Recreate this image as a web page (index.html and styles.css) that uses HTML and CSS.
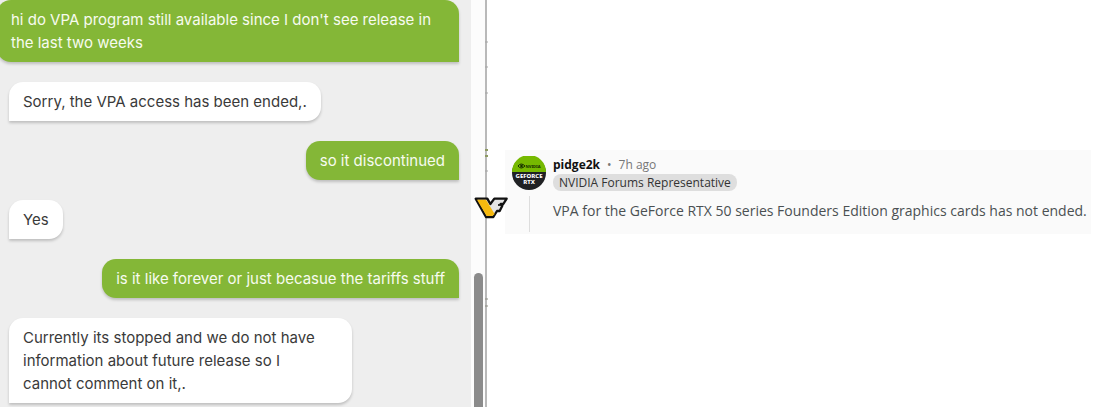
FILE: index.html
```html
<!DOCTYPE html>
<html lang="en">
<head>
    <meta charset="UTF-8">
    <meta name="viewport" content="width=device-width, initial-scale=1.0">
    <title>VPA program chat</title>
    <link rel="stylesheet" href="styles.css">
</head>
<body>
    <main class="page">
        <section class="chat">
            <div class="messages">
                <p class="message user long">hi do VPA program still available since I don't see release in the last two weeks</p>
                <p class="message agent">Sorry, the VPA access has been ended,.</p>
                <p class="message user">so it discontinued</p>
                <p class="message agent">Yes</p>
                <p class="message user">is it like forever or just becasue the tariffs stuff</p>
                <p class="message agent">Currently its stopped and we do not have<br>information about future release so I<br>cannot comment on it,.</p>
            </div>
            <div class="scrollbar">
                <div class="thumb"></div>
            </div>
        </section>

        <div class="divider">
            <!-- Faint marks along the line -->
            <svg class="marks" width="4" height="310" viewBox="0 0 4 310" aria-hidden="true">
                <path d="M0 42 H3 M0 67 H3 M0 93 H3 M0 171 H3" stroke="#a5a5a5"/>
                <path d="M0 150 H3 M0 156 H3" stroke="#8e9a62" stroke-width="2"/>
                <path d="M0 299 H3 M0 306 H3" stroke="#8b8b80"/>
            </svg>
            <!-- VF badge over the divider -->
            <svg class="badge" width="34" height="24" viewBox="0 0 102 72" aria-hidden="true">
                <path d="M5 8 H40 L49 24 L61 8 H98 L88 24 H80 L85 29 L77 45 H69 L58 63 H36 Z" fill="#e4e4e4" stroke="#111" stroke-width="7" stroke-linejoin="round"/>
                <path d="M9 11 H36 L62 54 L55 60 H38 Z" fill="#f6b90f"/>
                <path d="M72 27 H86" stroke="#111" stroke-width="5"/>
            </svg>
        </div>

        <section class="forum">
            <article class="comment">
                <div class="side">
                    <svg class="avatar" width="34" height="34" viewBox="0 0 34 34" role="img" aria-label="NVIDIA GeForce RTX">
                        <circle cx="17" cy="17" r="17" fill="#202124"/>
                        <path d="M0 16 A17 17 0 0 1 34 16 Z" fill="#76b900"/>
                        <path d="M6 10 Q9 6 13 10 Q9 14 6 10 Z" fill="none" stroke="#173000" stroke-width="1"/>
                        <circle cx="9.500" cy="10" r="1.300" fill="#173000"/>
                        <text x="21" y="12" class="brand">NVIDIA</text>
                        <text x="17" y="22" class="product">GEFORCE</text>
                        <text x="17" y="28" class="product">RTX</text>
                    </svg>
                    <div class="thread"></div>
                </div>
                <div class="body">
                    <div class="meta">
                        <a href="#" class="author">pidge2k</a>
                        <span class="dot">•</span>
                        <span class="time">7h ago</span>
                    </div>
                    <span class="flair">NVIDIA Forums Representative</span>
                    <p class="text">VPA for the GeForce RTX 50 series Founders Edition graphics cards has not ended.</p>
                </div>
            </article>
        </section>
    </main>
</body>
</html>
```
FILE: styles.css
```css
body {
    margin: 0;
    background-color: #fff;
    font-family: 'Open Sans', sans-serif;
}
.page {
    display: flex;
    min-height: 100vh;
}

/* Chat */
.chat {
    display: flex;
    flex: 0 0 485px;
    background-color: #eeeeee;
}
.messages {
    flex: 1;
    display: flex;
    flex-direction: column;
    gap: 20px;
    padding: 0 12px 4px 9px;
}
.message {
    margin: 0;
    padding: 8px 14px;
    max-width: 315px;
    border-radius: 14px;
    font-family: Inter, sans-serif;
    font-size: 15px;
    line-height: 23px;
    box-shadow: 0 2px 3px rgba(0, 0, 0, 0.2);
}
.agent:last-child {
    width: 315px;
}
.user {
    align-self: flex-end;
    max-width: 400px;
    background-color: #84b737;
    color: #f7fbef;
    border-bottom-right-radius: 0;
}
.agent {
    align-self: flex-start;
    background-color: #fff;
    color: #3a3a3a;
    border-bottom-left-radius: 0;
}
.long {
    max-width: none;
    margin-left: -12px; /* Runs past the left edge */
}
.scrollbar {
    width: 14px;
    display: flex;
    flex-direction: column;
    align-items: center;
    background-color: #fcfcfc;
}
.thumb {
    width: 9px;
    flex: 1;
    margin-top: 273px;
    border-radius: 5px 5px 0 0;
    background-color: #8b8b8b;
}

/* Line between both panes */
.divider {
    position: relative;
    width: 2px;
    background-color: #b9b9b9;
}
.marks {
    position: absolute;
    top: 0;
    left: 0;
}
.badge {
    position: absolute;
    top: 196px;
    left: -11px;
}

/* Forum comment */
.forum {
    flex: 1;
    padding: 150px 7px 0 18px;
}
.comment {
    display: flex;
    gap: 7px;
    padding: 6px 2px 2px 7px;
    background-color: #fafafa;
}
.side {
    display: flex;
    flex-direction: column;
    align-items: center;
    gap: 6px;
}
.thread {
    flex: 1;
    width: 1px;
    background-color: #dddddd;
}
.brand,
.product {
    font-family: 'Noto Sans', sans-serif;
    font-weight: 800;
    text-anchor: middle;
}
.brand {
    font-size: 4px;
    fill: #173000;
}
.product {
    font-size: 6px;
    fill: #fff;
}
.body {
    flex: 1;
    color: #4a5052;
}
.meta {
    display: flex;
    gap: 7px;
    font-size: 12px;
    line-height: 18px;
    color: #777;
}
.author {
    color: #111;
    font-weight: 700;
    text-decoration: none;
}
.flair {
    display: table;
    padding: 0 6px;
    border-radius: 8px;
    background-color: #dedede;
    color: #333;
    font-size: 12px;
    line-height: 17px;
}
.text {
    margin: 9px 0 10px;
    font-size: 14px;
    line-height: 22px;
}
```
